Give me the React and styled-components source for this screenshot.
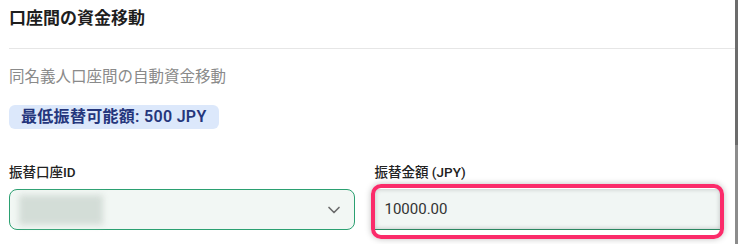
import React from "react";
import styled, { createGlobalStyle } from "styled-components";
import { ChevronDown } from "lucide-react";

const GlobalStyle = createGlobalStyle`
  html, body {
    margin: 0;
    padding: 0;
    background: #ffffff;
  }
  body {
    font-family: Roboto, "Noto Sans CJK JP", sans-serif;
  }
`;

const Page = styled.div`
  display: flex;
  width: 738px;
  height: 244px;
  overflow: hidden;
  background: #ffffff;
`;

const Panel = styled.div`
  flex: 1;
  display: flex;
  flex-direction: column;
  padding-left: 9px;
  min-width: 0;
`;

const Scrollbar = styled.div`
  width: 3px;
  background: linear-gradient(#6c6c6c 0, #6c6c6c 145px, #8c8c8c 145px);
`;

const Header = styled.div`
  height: 49px;
  box-sizing: border-box;
  padding-top: 6px;
  border-bottom: 1px solid #e6e6e6;
`;

const Title = styled.h2`
  margin: 0;
  font-size: 17px;
  line-height: 24px;
  font-weight: 700;
  color: #1e1e1e;
`;

const Body = styled.div`
  display: flex;
  flex-direction: column;
  align-items: flex-start;
  padding: 17px 15px 0 0;
`;

const Subtitle = styled.p`
  margin: 0;
  font-size: 15.5px;
  line-height: 22px;
  color: #8a8a8a;
`;

const Badge = styled.span`
  margin-top: 17px;
  height: 24px;
  padding: 0 12px;
  border-radius: 6px;
  background: #dce8fb;
  color: #25367c;
  font-size: 16px;
  font-weight: 600;
  letter-spacing: 0.3px;
  line-height: 24px;
`;

const FormGrid = styled.div`
  margin-top: 33px;
  width: 100%;
  display: grid;
  grid-template-columns: 1fr 1fr;
  column-gap: 20px;
`;

const Field = styled.div`
  display: flex;
  flex-direction: column;
  gap: 7px;
`;

const Label = styled.label`
  font-size: 13.5px;
  line-height: 20px;
  font-weight: 500;
  color: #222;
`;

const Select = styled.div`
  height: 41px;
  box-sizing: border-box;
  border: 1.5px solid #2ba071;
  border-radius: 8px;
  background: #f2f7f4;
  display: flex;
  align-items: center;
  justify-content: space-between;
  padding: 0 10px 0 9px;
  color: #6b6b6b;
`;

const Blurred = styled.div`
  width: 84px;
  height: 30px;
  background: #d3ddd7;
  filter: blur(3px);
`;

const InputWrap = styled.div`
  position: relative;
`;

const Input = styled.div`
  height: 41px;
  box-sizing: border-box;
  background: #f1f6f4;
  border-bottom: 1.5px solid #2a8760;
  box-shadow: inset 0 0 5px rgba(0, 0, 0, 0.22);
  display: flex;
  align-items: center;
  padding-left: 10px;
  font-size: 15px;
  color: #333;
`;

const Highlight = styled.span`
  position: absolute;
  inset: -5px -4px -9px -4px;
  border: 4px solid #fb2b6a;
  border-radius: 10px;
  box-shadow: 0 0 6px rgba(0, 0, 0, 0.25);
  pointer-events: none;
`;

export default function App() {
  return (
    <>
      <GlobalStyle />
      <Page>
        <Panel>
          <Header>
            <Title>口座間の資金移動</Title>
          </Header>
          <Body>
            <Subtitle>同名義人口座間の自動資金移動</Subtitle>
            <Badge>最低振替可能額: 500 JPY</Badge>
            <FormGrid>
              <Field>
                <Label>振替口座ID</Label>
                <Select>
                  <Blurred />
                  <ChevronDown size={20} strokeWidth={2} />
                </Select>
              </Field>
              <Field>
                <Label>振替金額 (JPY)</Label>
                <InputWrap>
                  <Input>10000.00</Input>
                  <Highlight />
                </InputWrap>
              </Field>
            </FormGrid>
          </Body>
        </Panel>
        <Scrollbar />
      </Page>
    </>
  );
}
